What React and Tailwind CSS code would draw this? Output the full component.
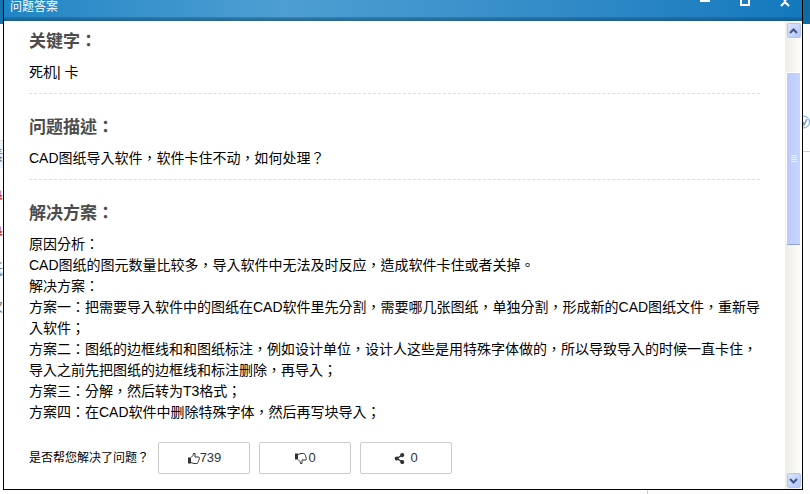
import { FaShareAlt } from "react-icons/fa";

const steps = [
  "原因分析：",
  "CAD图纸的图元数量比较多，导入软件中无法及时反应，造成软件卡住或者关掉。",
  "解决方案：",
  "方案一：把需要导入软件中的图纸在CAD软件里先分割，需要哪几张图纸，单独分割，形成新的CAD图纸文件，重新导",
  "入软件；",
  "方案二：图纸的边框线和和图纸标注，例如设计单位，设计人这些是用特殊字体做的，所以导致导入的时候一直卡住，",
  "导入之前先把图纸的边框线和标注删除，再导入；",
  "方案三：分解，然后转为T3格式；",
  "方案四：在CAD软件中删除特殊字体，然后再写块导入；",
];

function ThumbIcon({ className = "" }) {
  return (
    <svg viewBox="0 0 13 13" className={`h-[13px] w-[13px] ${className}`} fill="none" stroke="currentColor">
      <path d="M1 5.500h3v6H1z" fill="currentColor" stroke="none" />
      <path d="M4 5.500 6 3.500 6.500 1.500h1.500v3.500h4c.6.6.6 1.400 0 2 .3.700.1 1.300-.5 1.800.1.700-.1 1.200-.6 1.500 0 .8-.4 1.200-1.200 1.200H7L4 10.500" />
    </svg>
  );
}

function Section({ title, className = "", children }) {
  return (
    <section className={className}>
      <h2 className="text-[17px] leading-6 font-bold text-[#4c4c4c]">{title}</h2>
      <div className="mt-2 text-sm leading-[21px] whitespace-nowrap text-black">{children}</div>
    </section>
  );
}

function VoteButton({ label, className = "", children }) {
  return (
    <button
      aria-label={label}
      className={`flex h-8 w-[92px] items-center justify-center rounded-xs border border-[#ccc] bg-white text-[13px] text-[#333] ${className}`}
    >
      {children}
    </button>
  );
}

function TitleBar() {
  return (
    <header className="bg-linear-to-r from-[#1f85c5] via-[#4d9fd2] via-35% to-[#1279bd] text-white">
      <div className="flex h-[17px] justify-between px-[6px]">
        <h1 className="text-xs leading-[15px]">问题答案</h1>
        <div className="flex gap-[30px] pr-[6px]">
          <button aria-label="最小化" className="h-2 w-[10px]">
            <svg viewBox="0 0 10 8" className="h-2 w-[10px]"><path d="M0 0h10v2H0z" fill="currentColor" /></svg>
          </button>
          <button aria-label="最大化" className="h-2 w-[10px]">
            <svg viewBox="0 0 10 8" className="h-2 w-[10px]"><path d="M1 0v5h8V0" fill="none" stroke="currentColor" strokeWidth="2" /></svg>
          </button>
          <button aria-label="关闭" className="h-2 w-[10px]">
            <svg viewBox="0 0 10 8" className="h-2 w-[10px]"><path d="M1 6 5 2l4 4M4 0l1 1 1-1" fill="none" stroke="currentColor" strokeWidth="2" /></svg>
          </button>
        </div>
      </div>
      <div className="h-1 bg-linear-to-b from-[#0b5a94]/40 to-[#1c4a70]/70" />
    </header>
  );
}

function ArrowButton({ label, d }) {
  return (
    <button aria-label={label} className="flex h-[15px] w-[14px] items-center justify-center rounded-xs border border-[#b4c6ef] bg-linear-to-br from-[#dbe5ff] to-[#b3c6f7] text-[#3f5785]">
      <svg viewBox="0 0 9 6" className="h-[6px] w-[9px]">
        <path d={d} fill="none" stroke="currentColor" strokeWidth="2" />
      </svg>
    </button>
  );
}

function ScrollBar() {
  return (
    <div className="flex w-[17px] flex-col items-center bg-linear-to-r from-[#eeede5] to-[#fefefb] pt-[2px] pb-px">
      <ArrowButton label="向上滚动" d="M1 5 4.500 1.500 8 5" />
      <div className="mt-[34px] flex h-[173px] w-[15px] flex-col items-center justify-center gap-px rounded-xs border border-white border-b-[#8ca5d8] bg-linear-to-r from-[#bccafb] to-[#c5d5ff]">
        {[0, 1, 2, 3].map((i) => (
          <span key={i} className="h-px w-[6px] bg-[#eef4fe]" />
        ))}
      </div>
      <div className="grow" />
      <ArrowButton label="向下滚动" d="M1 1 4.500 4.500 8 1" />
    </div>
  );
}

export default function App() {
  return (
    <div
      lang="zh-Hant"
      className="flex h-screen w-full flex-col overflow-hidden bg-[#fdfdfd] font-['Liberation_Sans','Noto_Sans_CJK_TC',sans-serif]"
    >
      <div className="flex min-h-0 grow">
        {/* page behind the dialog, left edge */}
        <div className="flex w-[3px] flex-col overflow-hidden text-sm leading-[14px]">
          <div className="h-6 shrink-0 bg-[#1574ad]" />
          <div className="mt-[116px] flex h-7 shrink-0 items-center justify-end border-t border-[#ddd] bg-[#e8f0f8] text-[#667]">素</div>
          <span className="mt-[22px] flex w-[3px] justify-end font-bold text-[#c0392b]">导</span>
          <span className="mt-[22px] flex w-[3px] justify-end font-bold text-[#c0392b]">导</span>
          <span className="mt-[22px] flex w-[3px] justify-end text-[#777]">纸</span>
          <span className="mt-[23px] flex w-[3px] justify-end text-[#777]">次</span>
        </div>

        <main className="flex min-w-0 grow flex-col border-x border-b border-black bg-white">
          <TitleBar />
          <div className="flex min-h-0 grow">
            <div className="min-w-0 grow overflow-hidden px-[25px] pt-[9px]">
              <Section title="关键字：" className="border-b border-dashed border-[#ddd] pb-[10px]">
                死机| 卡
              </Section>
              <Section title="问题描述：" className="border-b border-dashed border-[#ddd] pt-[22px] pb-[10px]">
                CAD图纸导入软件，软件卡住不动，如何处理？
              </Section>
              <Section title="解决方案：" className="pt-[22px]">
                {steps.map((line) => (
                  <p key={line}>{line}</p>
                ))}
              </Section>
              <div className="mt-[19px] flex items-center gap-[9px] text-xs text-black">
                <span className="w-[120px]">是否帮您解决了问题？</span>
                <VoteButton label="有帮助 739">
                  <ThumbIcon />
                  739
                </VoteButton>
                <VoteButton label="没有帮助 0">
                  <ThumbIcon className="-scale-y-100" />
                  <span className="ml-px">0</span>
                </VoteButton>
                <VoteButton label="分享 0" className="gap-[5px]">
                  <FaShareAlt className="h-[11px] w-[11px]" />
                  0
                </VoteButton>
              </div>
            </div>
            <ScrollBar />
          </div>
        </main>

        {/* page behind the dialog, right edge */}
        <div className="flex w-[7px] flex-col overflow-hidden">
          <div className="h-6 shrink-0 bg-[#0d6aa3]" />
          <div className="mt-[91px] h-[37px] shrink-0 border-b border-[#ccd]">
            <svg viewBox="0 0 7 14" className="h-[14px] w-[7px]" fill="none" stroke="#6fa0d8">
              <circle cx="0.500" cy="7" r="6" />
              <path d="M0 7l1 3 3-6" strokeWidth="1.500" />
            </svg>
          </div>
        </div>
      </div>
      <div className="flex h-1 shrink-0">
        <div className="w-4/5 border-r border-[#ccc] bg-white" />
      </div>
    </div>
  );
}
